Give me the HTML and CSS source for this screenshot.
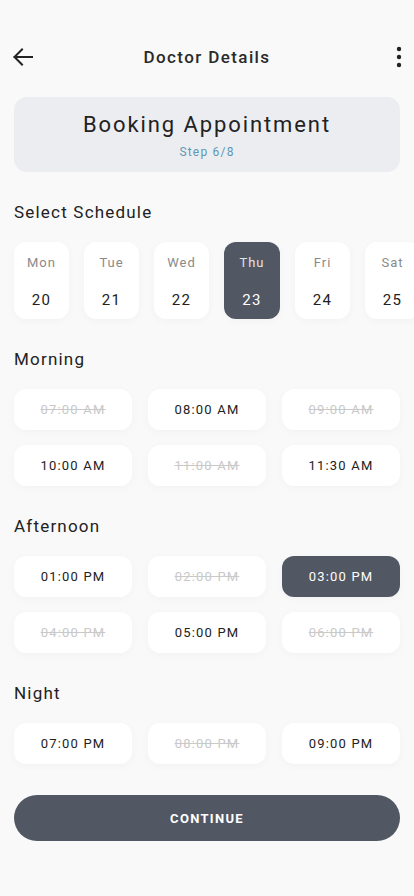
FILE: index.html
```html
<!DOCTYPE html>
<html>
<head>
<meta charset="utf-8">
<link rel="stylesheet" href="styles.css">
</head>
<body>
<div class="page">
  <header class="topbar">
    <svg class="icon back" width="24" height="24" viewBox="0 0 24 24"><path d="M21 12H3.5M11 4.5L3.5 12 11 19.5" fill="none" stroke="#222" stroke-width="2" stroke-linecap="square"/></svg>
    <h1 class="title">Doctor Details</h1>
    <svg class="icon more" width="6" height="22" viewBox="0 0 6 22"><circle cx="3" cy="3" r="2.2" fill="#222"/><circle cx="3" cy="11" r="2.2" fill="#222"/><circle cx="3" cy="19" r="2.2" fill="#222"/></svg>
  </header>

  <section class="step-card">
    <div class="step-title">Booking Appointment</div>
    <div class="step-sub">Step 6/8</div>
  </section>

  <h2 class="section">Select Schedule</h2>
  <div class="days">
    <div class="day"><span class="dname">Mon</span><span class="dnum">20</span></div>
    <div class="day"><span class="dname">Tue</span><span class="dnum">21</span></div>
    <div class="day"><span class="dname">Wed</span><span class="dnum">22</span></div>
    <div class="day active"><span class="dname">Thu</span><span class="dnum">23</span></div>
    <div class="day"><span class="dname">Fri</span><span class="dnum">24</span></div>
    <div class="day"><span class="dname">Sat</span><span class="dnum">25</span></div>
  </div>

  <h2 class="section">Morning</h2>
  <div class="slots">
    <div class="slot off">07:00 AM</div>
    <div class="slot">08:00 AM</div>
    <div class="slot off">09:00 AM</div>
    <div class="slot">10:00 AM</div>
    <div class="slot off">11:00 AM</div>
    <div class="slot">11:30 AM</div>
  </div>

  <h2 class="section">Afternoon</h2>
  <div class="slots">
    <div class="slot">01:00 PM</div>
    <div class="slot off">02:00 PM</div>
    <div class="slot active">03:00 PM</div>
    <div class="slot off">04:00 PM</div>
    <div class="slot">05:00 PM</div>
    <div class="slot off">06:00 PM</div>
  </div>

  <h2 class="section">Night</h2>
  <div class="slots">
    <div class="slot">07:00 PM</div>
    <div class="slot off">08:00 PM</div>
    <div class="slot">09:00 PM</div>
  </div>

  <button class="continue">CONTINUE</button>
</div>
</body>
</html>
```

FILE: styles.css
```css
* { box-sizing: border-box; }
html, body {
  margin: 0;
  padding: 0;
  background: #f9f9f9;
  font-family: Roboto, "Liberation Sans", sans-serif;
  color: #222;
}
.page {
  width: 414px;
  height: 896px;
  overflow: hidden;
  padding: 0 14px;
}
.topbar {
  height: 40px;
  margin-top: 37px;
  display: flex;
  align-items: center;
  justify-content: space-between;
  position: relative;
}
.back { margin-left: -3px; }
.more { margin-right: -2px; }
.title {
  position: absolute;
  left: 0;
  right: 0;
  text-align: center;
  margin: 0;
  font-size: 17px;
  font-weight: 500;
  letter-spacing: 1.4px;
  color: #2a2a2a;
  pointer-events: none;
}
.step-card {
  margin-top: 20px;
  height: 75px;
  background: #ecedf1;
  border-radius: 13px;
  display: flex;
  flex-direction: column;
  align-items: center;
  padding-top: 14px;
}
.step-title {
  font-size: 22px;
  line-height: 28px;
  letter-spacing: 1.9px;
  color: #222;
}
.step-sub {
  margin-top: 6px;
  font-size: 12px;
  line-height: 14px;
  letter-spacing: 1.2px;
  color: #5e98b4;
}
.section {
  margin: 30px 0 20px;
  font-size: 17px;
  line-height: 20px;
  font-weight: 400;
  letter-spacing: 1.2px;
  color: #222;
}
.days {
  display: flex;
  gap: 15px;
  margin-right: -14px;
}
.day {
  flex: 0 0 55px;
  height: 77px;
  background: #fff;
  border-radius: 12px;
  display: flex;
  flex-direction: column;
  align-items: center;
  padding-top: 13px;
  box-shadow: 0 2px 8px rgba(0,0,0,0.03);
}
.day.active { flex-basis: 56px; background: #525764; }
.dname {
  font-size: 13px;
  line-height: 16px;
  letter-spacing: 1px;
  color: #8a8a8a;
}
.dnum {
  margin-top: 19px;
  font-size: 15px;
  line-height: 20px;
  letter-spacing: 1.2px;
  color: #222;
}
.day.active .dname { color: #e2e3e6; }
.day.active .dnum { color: #fff; }
.slots {
  display: grid;
  grid-template-columns: repeat(3, 1fr);
  column-gap: 16px;
  row-gap: 15px;
}
.slots .slot {
  height: 41px;
  background: #fff;
  border-radius: 12px;
  display: flex;
  align-items: center;
  justify-content: center;
  font-size: 13px;
  letter-spacing: 1.2px;
  color: #222;
  box-shadow: 0 2px 8px rgba(0,0,0,0.03);
}
.slot.off {
  color: #c9c9c9;
  text-decoration: line-through;
}
.slot.active {
  background: #525764;
  color: #fff;
}
.continue {
  display: block;
  width: 100%;
  height: 46px;
  margin-top: 31px;
  border: none;
  border-radius: 23px;
  background: #525764;
  color: #fff;
  font-family: Roboto, "Liberation Sans", sans-serif;
  font-size: 13px;
  font-weight: 700;
  letter-spacing: 1.3px;
}
```
